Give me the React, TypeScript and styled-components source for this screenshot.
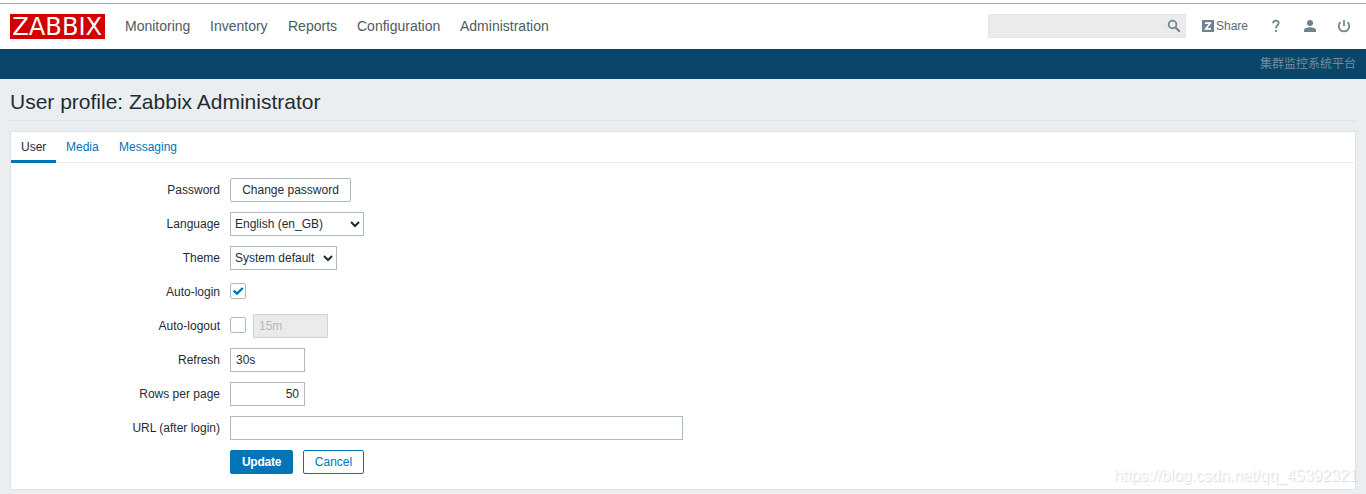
import React from "react";
import styled, { createGlobalStyle } from "styled-components";

const GlobalStyle = createGlobalStyle`
  *, *::before, *::after { box-sizing: border-box; }
  html { height: 100%; overflow: hidden; }
  body {
    margin: 0;
    background: #ebeef0;
    color: #1f2c33;
    font: 12px/18px "Liberation Sans", Arial, "Noto Sans CJK SC", sans-serif;
  }
  input, select, button { font-family: inherit; font-size: 12px; margin: 0; color: #1f2c33; }
`;

const Page = styled.div`
  height: 494px;
  display: flex;
  flex-direction: column;
`;

const TopEdge = styled.div`
  flex: none;
  height: 4px;
  background: #fff;
  border-bottom: 1px solid #ababab;
`;

const Header = styled.header`
  flex: none;
  height: 45px;
  padding: 0 10px;
  display: flex;
  align-items: center;
  background: #fff;
`;

const Logo = styled.svg`
  display: block;
  width: 95px;
  height: 25px;
  margin-right: 20px;
  background: #d40000;
  overflow: visible;
`;

const MainNav = styled.nav`
  display: flex;
  gap: 20px;
  padding-bottom: 2px;
`;

const NavLink = styled.a<{ $w: number }>`
  width: ${(p) => p.$w}px;
  font-size: 14px;
  line-height: 20px;
  white-space: nowrap;
  color: #4f5a61;
`;

const Tools = styled.div`
  margin-left: auto;
  display: flex;
  align-items: center;
  color: #6e838f;
`;

const Search = styled.div`
  width: 198px;
  height: 24px;
  margin-bottom: 1px;
  display: flex;
  align-items: center;
  padding-right: 4px;
  border: 1px solid #e3e6e6;
  background: #ebebeb;
`;

const SearchInput = styled.input`
  flex: 1;
  min-width: 0;
  border: 0;
  background: transparent;
`;

const Icon = styled.svg`
  display: block;
  flex: none;
`;

const Share = styled.a`
  display: flex;
  align-items: center;
  gap: 2px;
  width: 47px;
  margin: 0 18px 1px 16px;
  color: #5c6a73;
`;

const ToolIcons = styled.div`
  display: flex;
  gap: 16px;
  padding: 0 3px 1px 0;
`;

const SubHeader = styled.div`
  flex: none;
  height: 30px;
  padding: 0 10px;
  display: flex;
  align-items: center;
  justify-content: flex-end;
  background: #0a466a;
  color: #768d99;
`;

const Title = styled.h1`
  flex: none;
  height: 42px;
  margin: 0 10px 10px;
  padding-top: 11px;
  border-bottom: 1px solid #dfe4e7;
  font-size: 21px;
  line-height: 24px;
  font-weight: 400;
`;

const Panel = styled.main`
  flex: none;
  height: 359px;
  margin: 0 10px;
  background: #fff;
  border: 1px solid #dfe4e7;
`;

const Tabs = styled.nav`
  display: flex;
  height: 31px;
  border-bottom: 1px solid #ebeef0;
`;

const Tab = styled.a<{ $active?: boolean; $w: number }>`
  width: ${(p) => p.$w}px;
  height: 31px;
  padding: 6px 0 0 10px;
  color: ${(p) => (p.$active ? "#1f2c33" : "#0275b8")};
  border-bottom: ${(p) => (p.$active ? "3px solid #0275b8" : "0")};
`;

const Form = styled.form`
  display: flex;
  flex-direction: column;
  gap: 10px;
  padding-top: 15px;
`;

const Row = styled.div`
  display: flex;
  align-items: center;
  height: 24px;
`;

const Label = styled.label`
  width: 209px;
  margin-right: 10px;
  text-align: right;
  white-space: nowrap;
`;

const Button = styled.button<{ $kind?: "primary" | "link"; $w: number }>`
  width: ${(p) => p.$w}px;
  height: 24px;
  margin-right: 10px;
  padding: 0;
  border: 1px solid ${(p) => (p.$kind ? "#0275b8" : "#acbbc2")};
  border-radius: 2px;
  background: ${(p) => (p.$kind === "primary" ? "#0275b8" : "#fff")};
  color: ${(p) => (p.$kind === "primary" ? "#fff" : p.$kind ? "#0275b8" : "#1f2c33")};
  font-weight: ${(p) => (p.$kind === "primary" ? 700 : 400)};
  letter-spacing: ${(p) => (p.$kind === "primary" ? "-0.25px" : "0")};
  white-space: nowrap;
`;

const Select = styled.select<{ $w: number }>`
  width: ${(p) => p.$w}px;
  height: 24px;
  padding: 0;
  border: 1px solid #acbbc2;
  border-radius: 0;
  background: #fff;
`;

const TextInput = styled.input<{ $w: number; $right?: boolean }>`
  width: ${(p) => p.$w}px;
  height: 24px;
  padding: 0 5px;
  border: 1px solid #acbbc2;
  border-radius: 0;
  background: #fff;
  text-align: ${(p) => (p.$right ? "right" : "left")};
  &:disabled {
    background: #ebebeb;
    border-color: #ccd5d9;
    color: #acbbc2;
  }
`;

const CheckBox = styled.span`
  width: 16px;
  height: 16px;
  margin: 0 7px 2px 0;
  display: block;
  border: 1px solid #acbbc2;
  border-radius: 2px;
  background: #fff;
`;

const Watermark = styled.div`
  position: absolute;
  left: 1114px;
  top: 466px;
  font-size: 16px;
  letter-spacing: -0.06px;
  line-height: 20px;
  white-space: nowrap;
  color: rgba(255, 255, 255, 0.9);
  text-shadow: 1px 1px 1px rgba(0, 0, 0, 0.15);
`;

const menu: [string, number][] = [
  ["Monitoring", 65],
  ["Inventory", 58],
  ["Reports", 49],
  ["Configuration", 83],
  ["Administration", 90],
];

export default function App() {
  return (
    <Page>
      <GlobalStyle />
      <TopEdge />
      <Header>
        <Logo viewBox="0 0 95 25">
          <text x="2.2" y="21.3" textLength="90" lengthAdjust="spacingAndGlyphs" fill="#fff" fontFamily="DejaVu Sans, sans-serif" fontSize="24">
            ZABBIX
          </text>
        </Logo>
        <MainNav>
          {menu.map(([name, w]) => (
            <NavLink key={name} $w={w}>{name}</NavLink>
          ))}
        </MainNav>
        <Tools>
          <Search>
            <SearchInput />
            <Icon width="14" height="14" viewBox="0 0 14 14" fill="none" stroke="#6e838f">
              <circle cx="5.5" cy="5.5" r="3.9" strokeWidth="1.7" />
              <path d="M8.3 8.3 12.8 12.8" strokeWidth="2" />
            </Icon>
          </Search>
          <Share>
            <Icon width="12" height="12" viewBox="0 0 12 12">
              <rect width="12" height="12" fill="#6e838f" />
              <path d="M3 3.2H8.2L3.8 8.8H9" fill="none" stroke="#fff" strokeWidth="1.7" />
            </Icon>
            Share
          </Share>
          <ToolIcons>
            <Icon width="18" height="18" viewBox="0 0 18 18" fill="none" stroke="#6e838f" strokeWidth="1.8">
              <path d="M6.1 6.2C6.1 2.8 11.7 2.8 11.7 6C11.7 8 9 8.2 9 11.2" />
              <path d="M9 13V15" />
            </Icon>
            <Icon width="18" height="18" viewBox="0 0 18 18" fill="#6e838f">
              <circle cx="9" cy="6" r="3" />
              <path d="M3 15V13.2C3 11.2 6.5 10.3 9 10.3S15 11.2 15 13.2V15Z" />
            </Icon>
            <Icon width="18" height="18" viewBox="0 0 18 18" fill="none" stroke="#6e838f" strokeWidth="1.7">
              <path d="M9 3V9.2M5.4 5.2A5.3 5.3 0 1 0 12.6 5.2" />
            </Icon>
          </ToolIcons>
        </Tools>
      </Header>
      <SubHeader>集群监控系统平台</SubHeader>
      <Title>User profile: Zabbix Administrator</Title>
      <Panel>
        <Tabs>
          <Tab $active $w={45}>User</Tab>
          <Tab $w={53}>Media</Tab>
          <Tab $w={78}>Messaging</Tab>
        </Tabs>
        <Form onSubmit={(e) => e.preventDefault()}>
          <Row>
            <Label>Password</Label>
            <Button type="button" $w={121}>Change password</Button>
          </Row>
          <Row>
            <Label>Language</Label>
            <Select $w={134}><option>English (en_GB)</option></Select>
          </Row>
          <Row>
            <Label>Theme</Label>
            <Select $w={107}><option>System default</option></Select>
          </Row>
          <Row>
            <Label>Auto-login</Label>
            <CheckBox role="checkbox" aria-checked="true">
              <Icon width="14" height="14" viewBox="0 0 14 14" fill="none" stroke="#0275b8" strokeWidth="2.4">
                <path d="M2.7 6.6 6 9.6 11.8 4" />
              </Icon>
            </CheckBox>
          </Row>
          <Row>
            <Label>Auto-logout</Label>
            <CheckBox role="checkbox" aria-checked="false" />
            <TextInput $w={75} defaultValue="15m" disabled />
          </Row>
          <Row>
            <Label>Refresh</Label>
            <TextInput $w={75} defaultValue="30s" />
          </Row>
          <Row>
            <Label>Rows per page</Label>
            <TextInput $w={75} $right defaultValue="50" />
          </Row>
          <Row>
            <Label>URL (after login)</Label>
            <TextInput $w={453} />
          </Row>
          <Row>
            <Label />
            <Button type="submit" $kind="primary" $w={63}>Update</Button>
            <Button type="button" $kind="link" $w={61}>Cancel</Button>
          </Row>
        </Form>
      </Panel>
      <Watermark>https://blog.csdn.net/qq_45392321</Watermark>
    </Page>
  );
}
